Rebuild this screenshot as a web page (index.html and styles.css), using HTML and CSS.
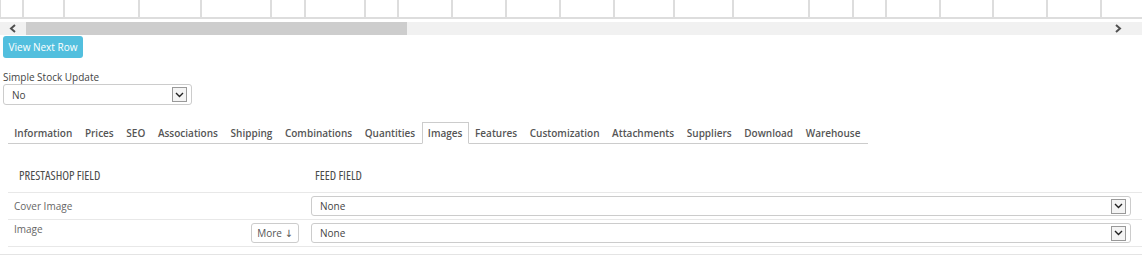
FILE: index.html
```html
<!DOCTYPE html>
<html lang="en">
<head>
  <meta charset="UTF-8">
  <title>Feed Mapping</title>
  <link rel="stylesheet" href="styles.css">
</head>
<body>
  <div class="grid-wrap">
    <div class="grid-row">
      <div class="cell" style="width:24px"></div>
      <div class="cell" style="width:41px"></div>
      <div class="cell" style="width:75px"></div>
      <div class="cell" style="width:62px"></div>
      <div class="cell" style="width:70px"></div>
      <div class="cell" style="width:34px"></div>
      <div class="cell" style="width:60px"></div>
      <div class="cell" style="width:33px"></div>
      <div class="cell" style="width:54px"></div>
      <div class="cell" style="width:54px"></div>
      <div class="cell" style="width:54px"></div>
      <div class="cell" style="width:54px"></div>
      <div class="cell" style="width:60px"></div>
      <div class="cell" style="width:59px"></div>
      <div class="cell" style="width:76px"></div>
      <div class="cell" style="width:44px"></div>
      <div class="cell" style="width:33px"></div>
      <div class="cell" style="width:54px"></div>
      <div class="cell" style="width:53px"></div>
      <div class="cell" style="width:54px"></div>
      <div class="cell" style="width:54px"></div>
      <div class="cell" style="width:54px"></div>
    </div>
    <div class="hscroll">
      <span class="arrow">
        <svg width="8" height="9" viewBox="0 0 8 9"><path d="M6 1 L2 4.5 L6 8" fill="none" stroke="#505050" stroke-width="2"/></svg>
      </span>
      <span class="thumb"></span>
      <span class="spacer"></span>
      <span class="arrow">
        <svg width="8" height="9" viewBox="0 0 8 9"><path d="M2 1 L6 4.5 L2 8" fill="none" stroke="#505050" stroke-width="2"/></svg>
      </span>
    </div>
  </div>

  <button class="btn-next">View Next Row</button>

  <div class="field">
    <label class="field-label">Simple Stock Update</label>
    <div class="select small">
      <span>No</span>
      <span class="caret"><svg width="9" height="6" viewBox="0 0 9 6"><path d="M1 1 L4.5 4.5 L8 1" fill="none" stroke="#222" stroke-width="1.4"/></svg></span>
    </div>
  </div>

  <ul class="tabs">
    <li>Information</li>
    <li>Prices</li>
    <li>SEO</li>
    <li>Associations</li>
    <li>Shipping</li>
    <li>Combinations</li>
    <li>Quantities</li>
    <li class="active">Images</li>
    <li>Features</li>
    <li>Customization</li>
    <li>Attachments</li>
    <li>Suppliers</li>
    <li>Download</li>
    <li>Warehouse</li>
  </ul>

  <div class="map">
    <div class="map-head">
      <div class="col-ps">PRESTASHOP FIELD</div>
      <div class="col-feed">FEED FIELD</div>
    </div>
    <div class="map-row">
      <div class="col-ps">Cover Image</div>
      <div class="col-feed">
        <div class="select wide">
          <span>None</span>
          <span class="caret"><svg width="9" height="6" viewBox="0 0 9 6"><path d="M1 1 L4.5 4.5 L8 1" fill="none" stroke="#222" stroke-width="1.4"/></svg></span>
        </div>
      </div>
    </div>
    <div class="map-row top">
      <div class="col-ps">
        <span>Image</span>
        <button class="btn-more">More &darr;</button>
      </div>
      <div class="col-feed">
        <div class="select wide">
          <span>None</span>
          <span class="caret"><svg width="9" height="6" viewBox="0 0 9 6"><path d="M1 1 L4.5 4.5 L8 1" fill="none" stroke="#222" stroke-width="1.4"/></svg></span>
        </div>
      </div>
    </div>
  </div>
  <div class="panel-end"></div>
</body>
</html>
```

FILE: styles.css
```css
body { margin:0; background:#fff; color:#555; font-family:'Open Sans', 'DejaVu Sans', sans-serif; font-size:10px; overflow:hidden; }

.grid-wrap { width:1142px; }
.grid-row { display:flex; height:17px; border-bottom:2px solid #ddd; overflow:hidden; }
.cell { flex:none; border-right:2px solid #ddd; box-sizing:border-box; }
.cell:first-child { border-left:1px solid #ddd; }
.hscroll { display:flex; align-items:center; height:13px; margin-top:3px; background:#f1f1f1; }
.hscroll .arrow { width:26px; display:flex; justify-content:center; }
.hscroll .thumb { width:381px; height:13px; background:#cdcdcd; }
.hscroll .spacer { flex:1; }
.hscroll .arrow:last-child { width:28px; justify-content:flex-start; padding-left:4px; }

.btn-next { display:block; margin:1px 0 0 3px; height:22px; width:80px; padding:0; background:#52bfde; color:#fff; border:none; border-radius:3px; font-family:inherit; font-size:10px; }

.field { margin:12px 0 0 3px; }
.field-label { display:block; color:#444; line-height:14px; }
.select { display:flex; align-items:center; justify-content:space-between; box-sizing:border-box; border:1px solid #ccc; border-radius:3px; background:#fff; color:#444; padding:0 4px 0 8px; }
.select.small { width:189px; height:21px; }
.select.wide { width:820px; height:20px; }
.caret { width:13px; height:13px; border:1px solid #999; background:#f4f4f4; display:flex; align-items:center; justify-content:center; }

.tabs { list-style:none; display:flex; margin:17px 0 0 8px; padding:0; width:860px; border-bottom:1px solid #ccc; height:21px; }
.tabs li { padding:1px 6.3px 0; line-height:20px; font-weight:600; color:#555; }
.tabs li.active { border:1px solid #ccc; border-bottom-color:#fff; margin-bottom:-1px; padding:0 5.3px; line-height:20px; background:#fff; }

.map { margin:24px 0 0 8px; }
.map-head { display:flex; height:24px; border-bottom:1px solid #e8e8e8; }
.map-head div { font-stretch:condensed; font-weight:400; color:#4a4a4a; font-size:12.5px; line-height:16px; }
.map-head .col-ps { padding-left:11px; }
.map-head .col-feed { padding-left:8px; }
.map-row { display:flex; align-items:center; height:26px; border-bottom:1px solid #e8e8e8; }
.map-row.top { align-items:flex-start; }
.col-ps { width:299px; padding-left:6px; box-sizing:border-box; }
.col-feed { flex:1; padding-left:4px; }
.map-row .col-ps { color:#666; }
.map-row.top .col-ps { display:flex; justify-content:space-between; align-items:flex-start; padding-top:3px; }
.map-row.top .col-ps span { line-height:12px; }
.map-row.top .col-feed { padding-top:3px; }
.btn-more { height:20px; width:48px; margin-right:8px; padding:0; border:1px solid #ccc; border-radius:3px; background:#fff; color:#555; font-family:inherit; font-size:10px; }
.panel-end { margin-top:7px; border-top:1px solid #e4e4e4; }
```
